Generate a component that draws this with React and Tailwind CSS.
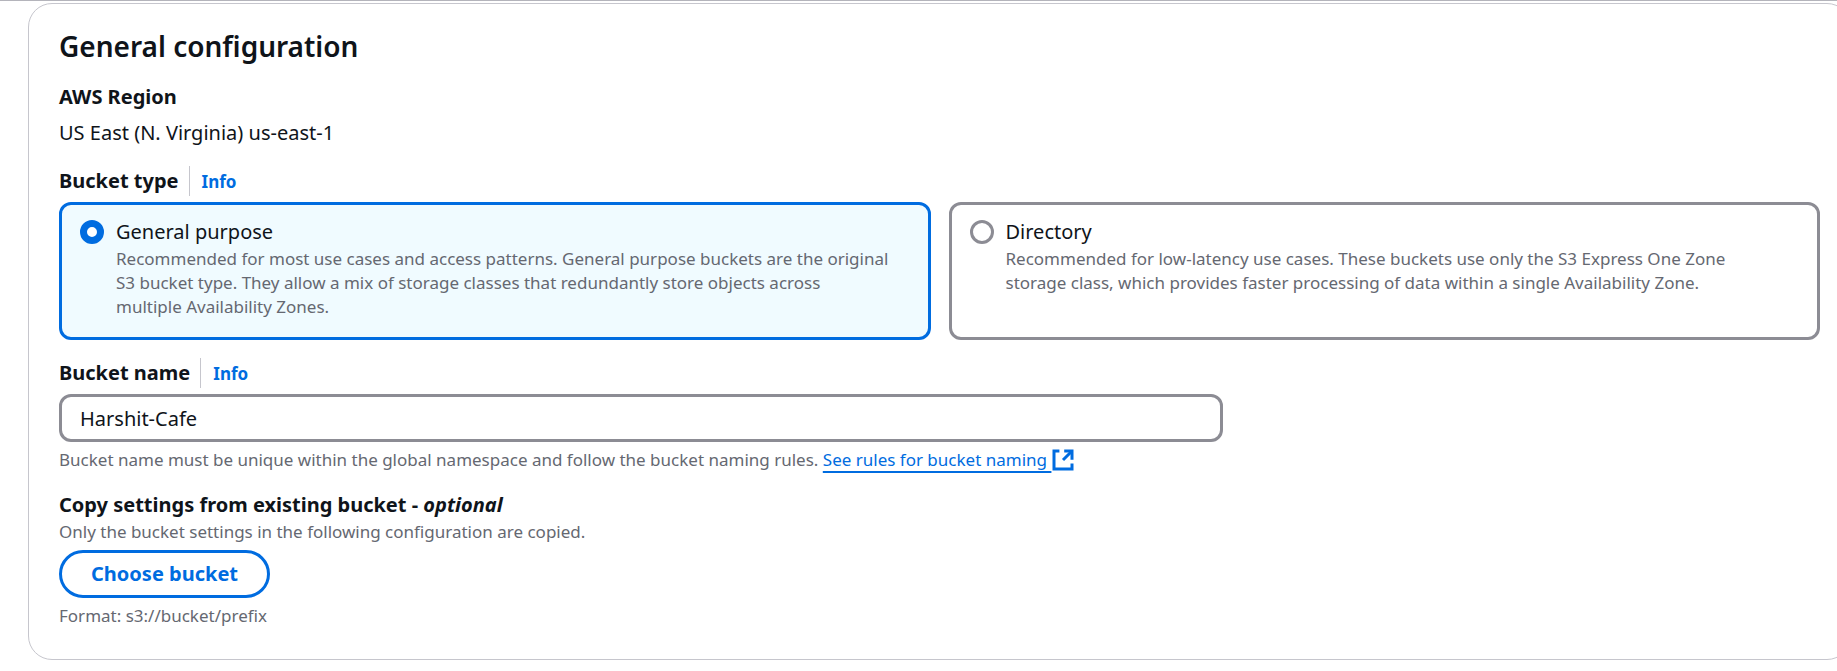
import React, { useState } from "react";

const BUCKET_TYPES = [
  {
    id: "general",
    title: "General purpose",
    lines: [
      "Recommended for most use cases and access patterns. General purpose buckets are the original",
      "S3 bucket type. They allow a mix of storage classes that redundantly store objects across",
      "multiple Availability Zones.",
    ],
  },
  {
    id: "directory",
    title: "Directory",
    lines: [
      "Recommended for low-latency use cases. These buckets use only the S3 Express One Zone",
      "storage class, which provides faster processing of data within a single Availability Zone.",
    ],
  },
];

function ExternalIcon() {
  return (
    <svg
      viewBox="0 0 16 16"
      className="size-6 shrink-0"
      fill="none"
      stroke="currentColor"
      strokeWidth="2"
      aria-hidden="true"
    >
      <path d="M5.6 2H2v12h12v-3.6" />
      <path d="M8.8 2H14v5.8" />
      <path d="M14 2 8 8" />
    </svg>
  );
}

function InfoLink() {
  return (
    <>
      <span className="mr-3 ml-2.5 w-px self-stretch bg-[#c6c6cd]" />
      <a href="#info" className="text-[17px] leading-6 font-bold text-[#006ce0]">
        Info
      </a>
    </>
  );
}

function TypeTile({ type, checked, onSelect }) {
  return (
    <label
      className={
        checked
          ? "flex gap-3 rounded-xl border-3 border-[#006ce0] bg-[#f0fbff] px-[18px] pt-[15px] pb-[18px]"
          : "flex gap-3 rounded-xl border-3 border-[#8c8c94] bg-white px-[18px] pt-[15px] pb-[18px]"
      }
    >
      <input
        type="radio"
        name="bucket-type"
        value={type.id}
        checked={checked}
        onChange={onSelect}
        className="size-6 shrink-0 appearance-none rounded-full border-3 border-[#8c8c94] bg-white checked:border-7 checked:border-[#006ce0]"
      />
      <span className="flex flex-col gap-[3px]">
        <span className="text-xl leading-6">{type.title}</span>
        <span className="text-[17px] leading-6 whitespace-pre-line text-[#656871]">
          {type.lines.join("\n")}
        </span>
      </span>
    </label>
  );
}

export default function App() {
  const [bucketType, setBucketType] = useState("general");
  const [name, setName] = useState("Harshit-Cafe");

  return (
    <main className="overflow-hidden border-t border-[#b4b4bb] bg-white pt-0.5 pb-2.5 font-['Noto_Sans',sans-serif] text-[#0f141a]">
      <section className="-mr-3.5 ml-7 flex flex-col gap-[18px] rounded-3xl border border-[#c6c6cd] px-[30px] pt-6 pb-[31px]">
        <h2 className="text-[28px] leading-9 font-semibold">
          General configuration
        </h2>

        <div className="flex flex-col gap-1.5 text-xl leading-[30px]">
          <h3 className="font-bold">AWS Region</h3>
          <p>US East (N. Virginia) us-east-1</p>
        </div>

        <div
          role="radiogroup"
          aria-labelledby="bucket-type-label"
          className="flex flex-col gap-1.5"
        >
          <div className="flex items-baseline text-xl leading-[30px]">
            <span id="bucket-type-label" className="font-bold">
              Bucket type
            </span>
            <InfoLink />
          </div>
          <div className="grid grid-cols-2 gap-[18px]">
            {BUCKET_TYPES.map((type) => (
              <TypeTile
                key={type.id}
                type={type}
                checked={bucketType === type.id}
                onSelect={() => setBucketType(type.id)}
              />
            ))}
          </div>
        </div>

        <div className="flex flex-col gap-1.5">
          <div className="flex items-baseline text-xl leading-[30px]">
            <label htmlFor="bucket-name" className="font-bold">
              Bucket name
            </label>
            <InfoLink />
          </div>
          <input
            id="bucket-name"
            type="text"
            value={name}
            onChange={(e) => setName(e.target.value)}
            className="h-12 w-[66.1%] rounded-xl border-3 border-[#8c8c94] bg-white px-[18px] text-xl outline-none"
          />
          <p className="flex text-[17px] leading-6 text-[#656871]">
            Bucket name must be unique within the global namespace and follow
            the bucket naming rules.&nbsp;
            <a href="#rules" className="flex text-[#006ce0]">
              <span className="underline decoration-2 underline-offset-5 [text-decoration-skip-ink:none]">
                See rules for bucket naming&nbsp;
              </span>
              <ExternalIcon />
            </a>
          </p>
        </div>

        <div className="flex flex-col items-start">
          <h3 className="text-xl leading-[30px] font-bold">
            Copy settings from existing bucket - <em>optional</em>
          </h3>
          <p className="text-[17px] leading-6 text-[#656871]">
            Only the bucket settings in the following configuration are copied.
          </p>
          <button
            type="button"
            className="my-1.5 h-12 rounded-full border-3 border-[#006ce0] bg-white px-[29px] text-xl font-bold text-[#006ce0]"
          >
            Choose bucket
          </button>
          <p className="text-[17px] leading-6 text-[#656871]">
            Format: s3://bucket/prefix
          </p>
        </div>
      </section>
    </main>
  );
}
